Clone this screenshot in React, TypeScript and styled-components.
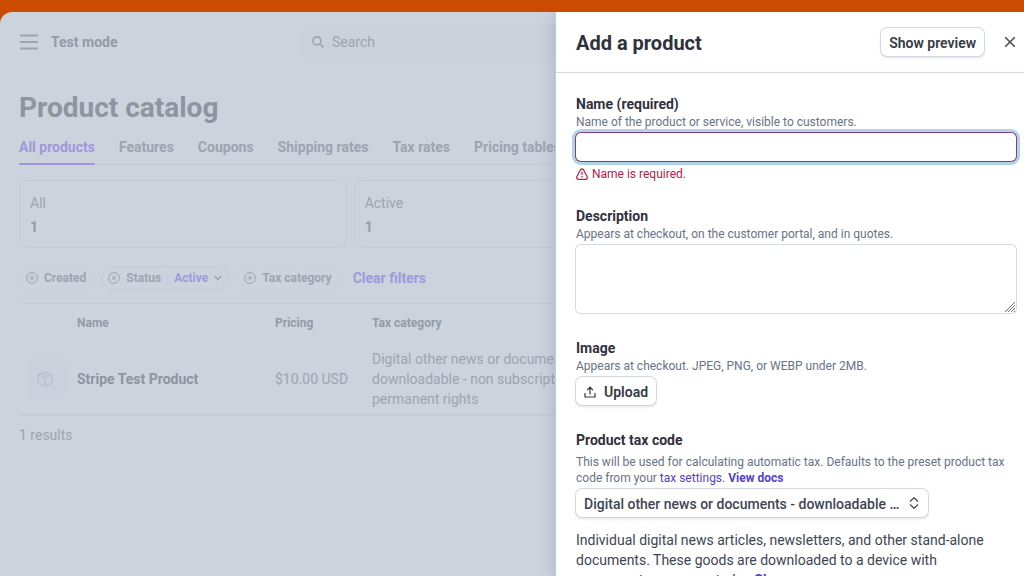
import React from "react";
import styled, { createGlobalStyle } from "styled-components";

const GlobalStyle = createGlobalStyle`
  *, *::before, *::after { box-sizing: border-box; }
  body {
    margin: 0;
    background: #cb4b00;
    font: 400 14px/20px Roboto, "Liberation Sans", sans-serif;
  }
  h1, h2, h3, p { margin: 0; }
  button, input, select, textarea { font: inherit; }
`;

const dim = {
  surface: "#ccd3dd",
  line: "#c4cbd5",
  faint: "#c8cfd9",
  title: "#8d95a1",
  strong: "#939ba7",
  text: "#9ca4b0",
  accent: "#a098dc",
};

const Shell = styled.div`
  display: flex;
  flex-direction: column;
  height: 100vh;
  padding-top: 12px;
`;

const Frame = styled.div`
  position: relative;
  flex: 1;
  min-height: 0;
  overflow: hidden;
  border-top-left-radius: 12px;
  background: ${dim.surface};
  color: ${dim.text};
`;

const PlainButton = styled.button`
  display: inline-flex;
  align-items: center;
  justify-content: center;
  padding: 0;
  border: 0;
  background: none;
  color: inherit;
`;

const TopBar = styled.header`
  display: flex;
  align-items: center;
  height: 60px;
  padding: 0 8px 0 19px;
`;

const Mode = styled.div`
  flex: 0 0 252px;
  margin-left: 12px;
  font-weight: 700;
  color: ${dim.strong};
`;

const SearchBox = styled.label`
  display: flex;
  flex: 1;
  align-items: center;
  gap: 8px;
  height: 36px;
  padding: 0 9px;
  border-radius: 6px;
  background: #cad1da;
`;

const SearchInput = styled.input`
  flex: 1;
  border: 0;
  padding: 0;
  outline: 0;
  background: none;
  color: inherit;
  &::placeholder { color: ${dim.text}; opacity: 1; }
`;

const Main = styled.main`
  padding: 18px 8px 0 19px;
`;

const PageTitle = styled.h1`
  font-size: 28px;
  line-height: 36px;
  font-weight: 700;
  color: ${dim.title};
`;

const Tabs = styled.nav`
  display: flex;
  gap: 24px;
  margin-top: 7px;
  box-shadow: inset 0 -1px ${dim.line};
`;

const Tab = styled.a<{ $active?: boolean }>`
  padding: 4px 0 6px;
  border-bottom: 2px solid ${(p) => (p.$active ? dim.accent : "transparent")};
  color: ${(p) => (p.$active ? dim.accent : dim.text)};
  font-weight: 700;
  text-decoration: none;
  white-space: nowrap;
`;

const Cards = styled.div`
  display: grid;
  grid-template-columns: repeat(3, 1fr);
  gap: 7px;
  margin-top: 15px;
`;

const Card = styled.button`
  display: flex;
  flex-direction: column;
  gap: 4px;
  padding: 12px 10px 10px;
  border: 1px solid ${dim.line};
  border-radius: 8px;
  background: none;
  color: inherit;
  text-align: left;
  strong { font-weight: 700; color: ${dim.strong}; }
`;

const Filters = styled.div`
  display: flex;
  align-items: center;
  gap: 8px;
  margin-top: 18px;
  padding-bottom: 13px;
  border-bottom: 1px solid ${dim.line};
`;

const Chip = styled.button<{ $on?: boolean }>`
  display: flex;
  align-items: center;
  gap: 6px;
  height: 24px;
  padding: 0 6px;
  border: 1px ${(p) => (p.$on ? "solid" : "dashed")} ${(p) => (p.$on ? dim.line : dim.faint)};
  border-radius: 12px;
  background: none;
  color: ${dim.text};
  font-size: 12px;
  line-height: 16px;
  font-weight: 700;
  white-space: nowrap;
`;

const ChipValue = styled.span`
  display: flex;
  align-items: center;
  gap: 6px;
  padding-left: 6px;
  border-left: 1px solid ${dim.faint};
  color: ${dim.accent};
`;

const ClearButton = styled(PlainButton)`
  margin-left: 6px;
  color: ${dim.accent};
  font-weight: 700;
`;

const Table = styled.table`
  width: 100%;
  border-collapse: collapse;
  table-layout: fixed;
  border-bottom: 2px solid #c5ccd6;
`;

const Head = styled.th`
  height: 38px;
  padding: 0;
  color: ${dim.strong};
  font-size: 12px;
  line-height: 16px;
  font-weight: 700;
  text-align: left;
`;

const Cell = styled.td<{ $bold?: boolean }>`
  padding: 7px 0 5px;
  color: ${(p) => (p.$bold ? dim.title : dim.text)};
  font-weight: ${(p) => (p.$bold ? 700 : 400)};
`;

const CellText = styled.div`
  width: 240px;
`;

const Thumb = styled.div`
  display: flex;
  align-items: center;
  justify-content: center;
  width: 40px;
  height: 40px;
  margin-left: 6px;
  border-radius: 4px;
  background: #cad1dd;
  color: #b7bec9;
`;

const Count = styled.p`
  padding-top: 9px;
`;

const Drawer = styled.aside`
  position: absolute;
  inset: 0 0 0 auto;
  display: flex;
  flex-direction: column;
  width: 468px;
  background: #fff;
  color: #414552;
  box-shadow: 0 0 0 1px #c3c8d6, 0 4px 16px rgba(80, 80, 130, 0.3);
`;

const DrawerHeader = styled.header`
  display: flex;
  align-items: center;
  flex: none;
  height: 61px;
  padding: 0 8px 0 20px;
  border-bottom: 1px solid #d5dbe1;
`;

const DrawerTitle = styled.h2`
  flex: 1;
  padding-top: 2px;
  color: #30313d;
  font-size: 20px;
  line-height: 28px;
  font-weight: 700;
`;

const Outlined = styled.button`
  display: inline-flex;
  align-items: center;
  gap: 8px;
  height: 28px;
  padding: 2px 8px 0;
  border: 0;
  border-radius: 6px;
  background: #fff;
  box-shadow: 0 0 0 1px #d3d7de, 0 2px 3px rgba(60, 66, 87, 0.16);
  color: #353a44;
  font-weight: 600;
`;

const CloseButton = styled(PlainButton)`
  margin-left: 20px;
  color: #474e5a;
`;

const Form = styled.form`
  display: flex;
  flex-direction: column;
  gap: 24px;
  flex: 1;
  min-height: 0;
  overflow: hidden;
  padding: 21px 8px 0 20px;
  > * { flex: none; }
`;

/* Controls draw their outline as a shadow, so the label text and the inner edge share one line. */
const Control = styled.div`
  position: relative;
  display: flex;
  margin: 3px 0 1px;
`;

const Label = styled.label`
  display: block;
  color: #30313d;
  font-size: 14px;
  font-weight: 700;
`;

const Help = styled.p<{ $spaced?: boolean }>`
  margin-top: ${(p) => (p.$spaced ? "4px" : "0")};
  color: #687385;
  font-size: 12px;
  line-height: 16px;
`;

const Link = styled.a<{ $bold?: boolean }>`
  color: #5540cf;
  font-weight: ${(p) => (p.$bold ? 700 : 400)};
  text-decoration: none;
`;

const MoreLink = styled(Link)`
  margin-left: 4px;
`;

const TextInput = styled.input`
  width: 100%;
  height: 28px;
  padding: 4px 8px;
  border: 0;
  border-radius: 5px;
  outline: 0;
  background: #fff;
  box-shadow: 0 0 0 1px #8f3a72, 0 0 0 4px #b0d2ea;
`;

const ErrorText = styled.p`
  display: flex;
  align-items: center;
  gap: 4px;
  margin-top: 5px;
  color: #b81a48;
  font-size: 12px;
  line-height: 16px;
`;

const TextArea = styled.textarea`
  display: block;
  width: 100%;
  height: 68px;
  padding: 4px 8px;
  border: 0;
  border-radius: 5px;
  outline: 0;
  resize: none;
  box-shadow: 0 0 0 1px #d5dbe1;
`;

const Grip = styled.svg`
  position: absolute;
  right: 1px;
  bottom: 1px;
  pointer-events: none;
`;

const SelectWrap = styled(Control)`
  width: 352px;
`;

const Select = styled.select`
  appearance: none;
  width: 100%;
  height: 28px;
  padding: 2px 28px 0 8px;
  border: 0;
  border-radius: 6px;
  background: #fff;
  box-shadow: 0 0 0 1px #d3d7de, 0 2px 3px rgba(60, 66, 87, 0.16);
  color: #414552;
  font-weight: 500;
  text-overflow: ellipsis;
  white-space: nowrap;
  overflow: hidden;
`;

const SelectArrows = styled.svg`
  position: absolute;
  right: 8px;
  top: 8px;
  pointer-events: none;
`;

const Note = styled.p`
  margin-top: 13px;
  padding-right: 16px;
  color: #414552;
`;

const CircleIcon = ({ cross = false }: { cross?: boolean }) => (
  <svg width="12" height="12" viewBox="0 0 12 12" fill="none" stroke="currentColor" aria-hidden="true">
    <circle cx="6" cy="6" r="5.4" />
    <path d={cross ? "M3.8 3.8l4.4 4.4M8.2 3.8L3.8 8.2" : "M6 3.4v5.2M3.4 6h5.2"} />
  </svg>
);

const tabs = ["All products", "Features", "Coupons", "Shipping rates", "Tax rates", "Pricing tables"];
const cards = [
  { label: "All", value: 1 },
  { label: "Active", value: 1 },
  { label: "Archived", value: 0 },
];

export default function App() {
  return (
    <Shell>
      <GlobalStyle />
      <Frame>
        <TopBar>
          <PlainButton aria-label="Open navigation">
            <svg width="20" height="16" viewBox="0 0 20 16" stroke="currentColor" strokeWidth="2" aria-hidden="true">
              <path d="M1 1.5h18M1 8h18M1 14.5h18" />
            </svg>
          </PlainButton>
          <Mode>Test mode</Mode>
          <SearchBox>
            <svg width="12" height="12" viewBox="0 0 12 12" fill="none" stroke="currentColor" strokeWidth="1.6" aria-hidden="true">
              <circle cx="4.9" cy="4.9" r="4" />
              <path d="M7.8 7.8L11.6 11.6" />
            </svg>
            <SearchInput type="search" placeholder="Search" aria-label="Search" />
          </SearchBox>
        </TopBar>
        <Main>
          <PageTitle>Product catalog</PageTitle>
          <Tabs>
            {tabs.map((tab, i) => (
              <Tab key={tab} href="#" $active={i === 0}>{tab}</Tab>
            ))}
          </Tabs>
          <Cards>
            {cards.map((card) => (
              <Card key={card.label}>
                <span>{card.label}</span>
                <strong>{card.value}</strong>
              </Card>
            ))}
          </Cards>
          <Filters>
            <Chip><CircleIcon />Created</Chip>
            <Chip $on>
              <CircleIcon cross />Status
              <ChipValue>
                Active
                <svg width="8" height="6" viewBox="0 0 8 6" fill="none" stroke={dim.text} strokeWidth="1.6" aria-hidden="true">
                  <path d="M.8 1.2L4 4.4l3.2-3.2" />
                </svg>
              </ChipValue>
            </Chip>
            <Chip><CircleIcon />Tax category</Chip>
            <ClearButton>Clear filters</ClearButton>
          </Filters>
          <Table>
            <colgroup>
              <col style={{ width: 58 }} />
              <col style={{ width: 198 }} />
              <col style={{ width: 97 }} />
              <col />
            </colgroup>
            <thead>
              <tr>
                <Head aria-label="Image" />
                <Head>Name</Head>
                <Head>Pricing</Head>
                <Head>Tax category</Head>
              </tr>
            </thead>
            <tbody>
              <tr>
                <Cell>
                  <Thumb>
                    <svg width="16" height="16" viewBox="0 0 16 16" fill="none" stroke="currentColor" strokeWidth="1.2" strokeLinejoin="round" aria-hidden="true">
                      <path d="M8 .8l6.8 3v8.4L8 15.2l-6.8-3V3.8zM1.2 3.8L8 7l6.8-3.2M8 7v8.2M4.6 2.3l6.8 3.2" />
                    </svg>
                  </Thumb>
                </Cell>
                <Cell $bold>Stripe Test Product</Cell>
                <Cell>$10.00 USD</Cell>
                <Cell>
                  <CellText>Digital other news or documents - downloadable - non subscription - with permanent rights</CellText>
                </Cell>
              </tr>
            </tbody>
          </Table>
          <Count>1 results</Count>
        </Main>

        <Drawer aria-labelledby="drawer-title">
          <DrawerHeader>
            <DrawerTitle id="drawer-title">Add a product</DrawerTitle>
            <Outlined>Show preview</Outlined>
            <CloseButton aria-label="Close">
              <svg width="12" height="12" viewBox="0 0 12 12" stroke="currentColor" strokeWidth="1.6" aria-hidden="true">
                <path d="M1.2 1.2l9.6 9.6M10.8 1.2l-9.6 9.6" />
              </svg>
            </CloseButton>
          </DrawerHeader>
          <Form>
            <div>
              <Label htmlFor="name">Name (required)</Label>
              <Help>Name of the product or service, visible to customers.</Help>
              <Control><TextInput id="name" aria-invalid="true" aria-describedby="name-error" /></Control>
              <ErrorText id="name-error">
                <svg width="12" height="12" viewBox="0 0 12 12" fill="none" stroke="currentColor" strokeWidth="1.2" strokeLinejoin="round" aria-hidden="true">
                  <path d="M4.6 1.5Q6 .1 7.4 1.5L11.2 8.8Q11.7 11.2 9.6 11.3H2.4Q.3 11.2.8 8.8z" />
                  <path d="M6 3.6v3.2M6 8v1.4" />
                </svg>
                Name is required.
              </ErrorText>
            </div>
            <div>
              <Label htmlFor="description">Description</Label>
              <Help>Appears at checkout, on the customer portal, and in quotes.</Help>
              <Control>
                <TextArea id="description" />
                <Grip width="10" height="10" viewBox="0 0 10 10" stroke="#6b6f76" aria-hidden="true">
                  <path d="M0 10L10 0M3 10l7-7M6 10l4-4M9 10l1-1" />
                </Grip>
              </Control>
            </div>
            <div>
              <Label as="h3">Image</Label>
              <Help>Appears at checkout. JPEG, PNG, or WEBP under 2MB.</Help>
              <Control>
                <Outlined type="button">
                  <svg width="12" height="12" viewBox="0 0 12 12" fill="none" stroke="currentColor" strokeWidth="1.2" aria-hidden="true">
                    <path d="M1 7v4h10V7M6 8.4V1.4M3.2 4L6 1.2 8.8 4" />
                  </svg>
                  Upload
                </Outlined>
              </Control>
            </div>
            <div>
              <Label htmlFor="tax-code">Product tax code</Label>
              <Help $spaced>
                This will be used for calculating automatic tax. Defaults to the preset product tax code from your{" "}
                <Link href="#">tax settings</Link>. <Link href="#" $bold>View docs</Link>
              </Help>
              <SelectWrap>
                <Select id="tax-code">
                  <option>Digital other news or documents - downloadable - non subscription - with permanent rights</option>
                </Select>
                <SelectArrows width="12" height="12" viewBox="0 0 12 12" fill="none" stroke="#474e5a" strokeWidth="1.4" aria-hidden="true">
                  <path d="M2 4.4L6 .8l4 3.6M2 7.6l4 3.6 4-3.6" />
                </SelectArrows>
              </SelectWrap>
              <Note>
                Individual digital news articles, newsletters, and other stand-alone documents. These goods are
                downloaded to a device with permanent usage granted... <MoreLink href="#" $bold>Show more</MoreLink>
              </Note>
            </div>
          </Form>
        </Drawer>
      </Frame>
    </Shell>
  );
}
